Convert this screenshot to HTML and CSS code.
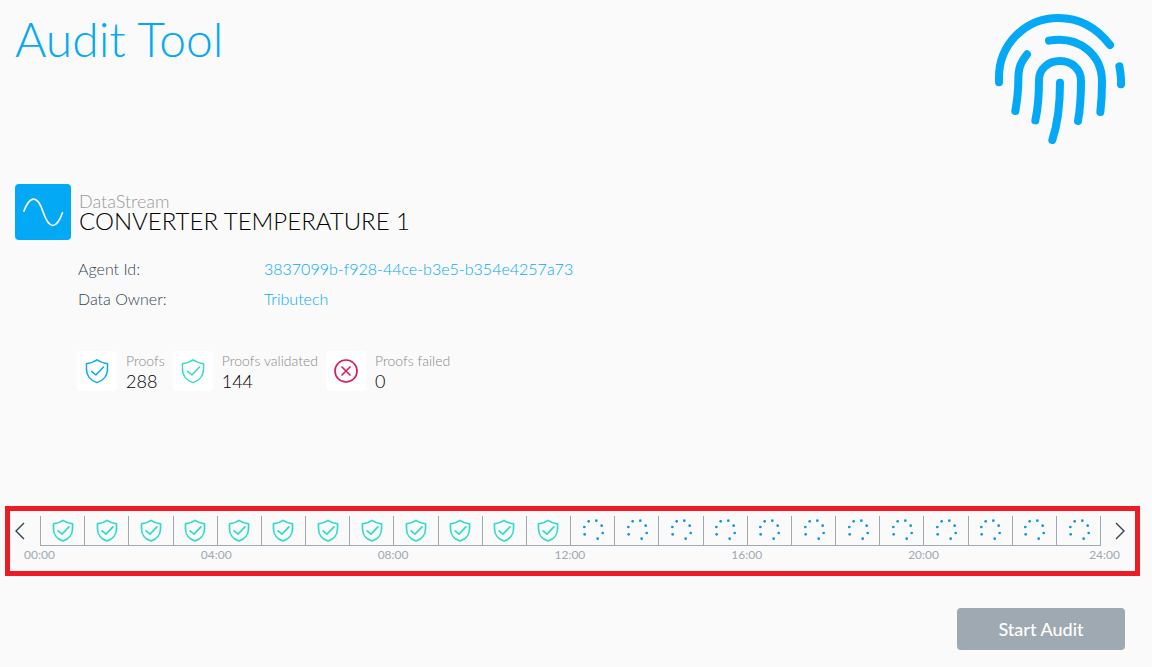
FILE: index.html
```html
<!DOCTYPE html>
<html lang="en">
<head>
<meta charset="utf-8">
<title>Audit Tool</title>
<link rel="stylesheet" href="styles.css">
</head>
<body>
<svg class="symbols" aria-hidden="true">
  <symbol id="shield" viewBox="0 0 66 70">
    <path d="M33 4C41 10 50 13 62 15V29C62 48 50 62 33 67C16 62 4 48 4 29V15C16 13 25 10 33 4Z"/>
    <path d="M18 36L30 46L51 24"/>
  </symbol>
  <symbol id="dots" viewBox="0 0 66 66">
    <circle cx="7" cy="24" r="4"/><circle cx="20" cy="7" r="4"/><circle cx="43" cy="5" r="4"/><circle cx="59" cy="20" r="4"/><circle cx="62" cy="42" r="4"/><circle cx="47" cy="59" r="4"/><circle cx="8" cy="46" r="4"/>
  </symbol>
</svg>
<main class="page">
  <header class="header">
    <h1 class="title">Audit Tool</h1>
    <svg class="fingerprint" viewBox="45 42 390 390" aria-hidden="true">
      <path d="M57 247V232C57 134 135 54 235 54C298 54 350 83 390 135"/>
      <path d="M207 122C298 106 366 165 366 245C366 280 364 310 361 336"/>
      <path d="M141 163C120 190 115 205 115 240C115 280 110 310 106 333"/>
      <path d="M166 361C174 325 177 290 177 240C177 207 205 183 240 183C275 183 303 207 303 243C303 290 300 330 294 363"/>
      <path d="M240 248C240 310 235 365 217 420"/>
      <path d="M418 199C422 220 424 238 423 253"/>
    </svg>
  </header>

  <section class="stream">
    <svg class="stream-icon" viewBox="0 0 168 168" aria-hidden="true">
      <path d="M26 83C42 40 65 26 84 83C103 138 124 138 143 85"/>
    </svg>
    <div>
      <p class="stream-kind">DataStream</p>
      <h2 class="stream-name">CONVERTER TEMPERATURE 1</h2>
    </div>
  </section>

  <dl class="details">
    <dt>Agent Id:</dt><dd><a href="#">3837099b-f928-44ce-b3e5-b354e4257a73</a></dd>
    <dt>Data Owner:</dt><dd><a href="#">Tributech</a></dd>
  </dl>

  <section class="stats">
    <div class="stat">
      <span class="tile"><svg class="tile-icon blue"><use href="#shield"/></svg></span>
      <div><p class="stat-label">Proofs</p><p class="stat-value">288</p></div>
    </div>
    <div class="stat">
      <span class="tile"><svg class="tile-icon green"><use href="#shield"/></svg></span>
      <div><p class="stat-label">Proofs validated</p><p class="stat-value">144</p></div>
    </div>
    <div class="stat">
      <span class="tile"><svg class="tile-icon red" viewBox="0 0 72 72"><circle cx="36" cy="36" r="33"/><path d="M24 24L48 48M48 24L24 48"/></svg></span>
      <div><p class="stat-label">Proofs failed</p><p class="stat-value">0</p></div>
    </div>
  </section>

  <section class="timeline">
    <div class="track">
      <button class="arrow prev" aria-label="Previous day"><svg viewBox="0 0 10 18"><path d="M9 1L1 9L9 17"/></svg></button>
      <ol class="slots">
        <li><svg class="ok"><use href="#shield"/></svg></li>
        <li><svg class="ok"><use href="#shield"/></svg></li>
        <li><svg class="ok"><use href="#shield"/></svg></li>
        <li><svg class="ok"><use href="#shield"/></svg></li>
        <li><svg class="ok"><use href="#shield"/></svg></li>
        <li><svg class="ok"><use href="#shield"/></svg></li>
        <li><svg class="ok"><use href="#shield"/></svg></li>
        <li><svg class="ok"><use href="#shield"/></svg></li>
        <li><svg class="ok"><use href="#shield"/></svg></li>
        <li><svg class="ok"><use href="#shield"/></svg></li>
        <li><svg class="ok"><use href="#shield"/></svg></li>
        <li><svg class="ok"><use href="#shield"/></svg></li>
        <li><svg class="wait"><use href="#dots"/></svg></li>
        <li><svg class="wait"><use href="#dots"/></svg></li>
        <li><svg class="wait"><use href="#dots"/></svg></li>
        <li><svg class="wait"><use href="#dots"/></svg></li>
        <li><svg class="wait"><use href="#dots"/></svg></li>
        <li><svg class="wait"><use href="#dots"/></svg></li>
        <li><svg class="wait"><use href="#dots"/></svg></li>
        <li><svg class="wait"><use href="#dots"/></svg></li>
        <li><svg class="wait"><use href="#dots"/></svg></li>
        <li><svg class="wait"><use href="#dots"/></svg></li>
        <li><svg class="wait"><use href="#dots"/></svg></li>
        <li><svg class="wait"><use href="#dots"/></svg></li>
      </ol>
      <button class="arrow next" aria-label="Next day"><svg viewBox="0 0 10 18"><path d="M1 1L9 9L1 17"/></svg></button>
    </div>
    <div class="hours">
      <span>00:00</span><span>04:00</span><span>08:00</span><span>12:00</span><span>16:00</span><span>20:00</span><span class="end">24:00</span>
    </div>
  </section>

  <footer class="actions"><button class="start">Start Audit</button></footer>
</main>
</body>
</html>
```
FILE: styles.css
```css
* { box-sizing: border-box; }
body, h1, h2, p, dl, dd, ol { margin: 0; padding: 0; }
body { background: #fafafa; color: #000; font-family: Lato, "Liberation Sans", sans-serif; }
button { border: 0; padding: 0; background: none; font: inherit; cursor: pointer; }
svg { display: block; }
.symbols { position: absolute; width: 0; height: 0; }

.header { display: flex; justify-content: space-between; align-items: flex-start; padding: 14px 27px 0 15px; }
.title { font-size: 48px; line-height: 49px; font-weight: 300; color: #03a9f4; }
.fingerprint { width: 130px; height: 130px; fill: none; stroke: #03a9f4; stroke-width: 24; stroke-linecap: round; }

.stream { display: flex; gap: 8px; margin: 40px 15px 0; }
.stream-icon { width: 56px; height: 56px; border-radius: 4px; background: #03a9f4; fill: none; stroke: #fff; stroke-width: 5; }
.stream-kind { padding-top: 8px; font-size: 18px; line-height: 19px; font-weight: 300; color: #999; }
.stream-name { font-size: 24px; line-height: 20px; font-weight: 300; }

.details { display: grid; grid-template-columns: 186px 1fr; margin: 14px 15px 0 78px; font-size: 16px; line-height: 30px; font-weight: 300; color: #2f4554; }
.details a { color: #03a9f4; text-decoration: none; }

.stats { display: flex; gap: 8px; margin: 37px 15px 0 77px; }
.stat { display: flex; gap: 9px; }
.tile { display: flex; align-items: center; justify-content: center; width: 40px; height: 40px; border-radius: 4px; background: #fff; }
.tile-icon { width: 24px; height: 26px; fill: none; stroke-width: 4; stroke-linecap: round; stroke-linejoin: round; }
.blue { stroke: #03a9f4; }
.green { stroke: #2ddbc8; }
.red { stroke: #d81b60; stroke-width: 5; }
.stat-label { font-size: 14px; line-height: 20px; font-weight: 300; color: #888; }
.stat-value { font-size: 18px; line-height: 20px; font-weight: 300; }

.timeline { margin: 115px 12px 0 5px; border: 5px solid #ed1c24; padding: 5px 0 8px; }
.track { display: flex; }
.arrow { display: flex; align-items: center; width: 30px; height: 30px; }
.arrow svg { width: 10px; height: 18px; fill: none; stroke: #2f4554; stroke-width: 1.4; }
.prev { padding-left: 5px; }
.next { width: 34px; padding-left: 14px; }
.slots { display: flex; flex: 1; list-style: none; border-bottom: 1px solid #9fa9b1; }
.slots li { display: flex; flex: 1; justify-content: center; padding-top: 3px; border-right: 1px solid #9fa9b1; }
.slots li:first-child { border-left: 1px solid #9fa9b1; }
.ok { width: 22px; height: 23px; fill: none; stroke: #2ddbc8; stroke-width: 5; stroke-linecap: round; stroke-linejoin: round; }
.wait { width: 22px; height: 22px; fill: #0f94d2; }
.hours { display: flex; padding: 0 15px 0 14px; font-size: 12px; line-height: 17px; color: #9fa9b1; }
.hours span { flex: 1; }
.hours .end { flex: none; width: 35px; text-align: right; }

.actions { display: flex; justify-content: flex-end; margin: 32px 27px 17px 15px; }
.start { width: 168px; height: 42px; border-radius: 4px; background: #9fa9b1; color: #fff; font-size: 18px; font-weight: 500; }
```
